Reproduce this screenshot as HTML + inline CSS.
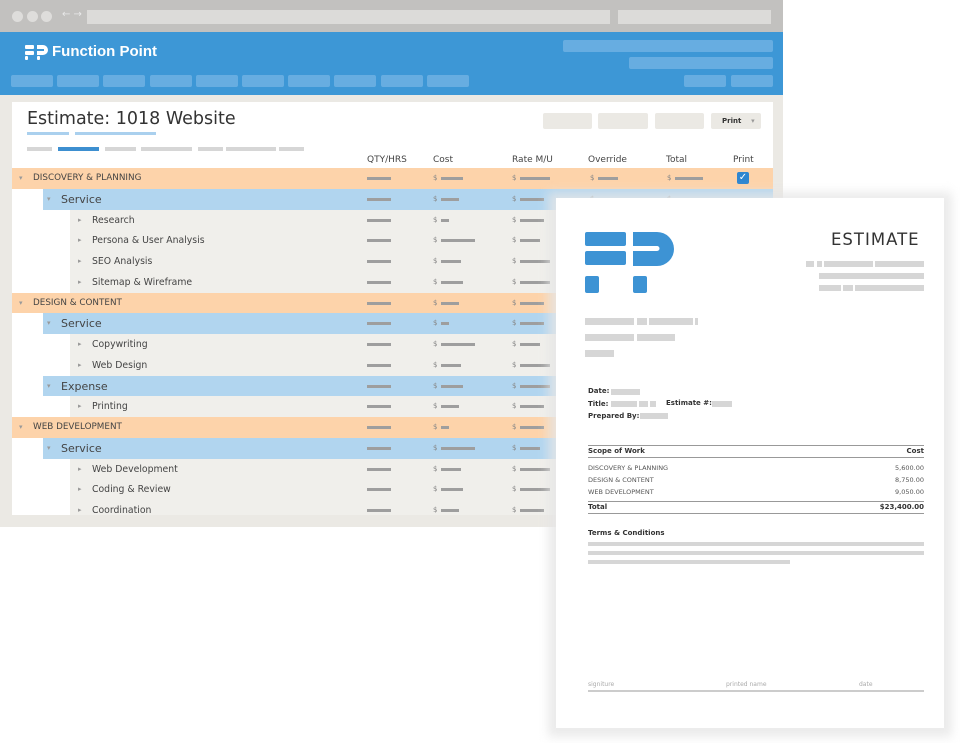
<!DOCTYPE html>
<html><head><meta charset="utf-8"><style>
*{margin:0;padding:0;box-sizing:border-box}
body{width:960px;height:743px;background:#fff;position:relative;overflow:hidden;font-family:"DejaVu Sans","Liberation Sans",sans-serif}
.a{position:absolute}
.bar{position:absolute;height:3px;background:#9e9e9e}
.gb{position:absolute;background:#d6d6d6}
.row{position:absolute;height:21px}
.t{position:absolute;font-size:8.5px;color:#333}
</style></head><body>
<div class="a" style="left:0;top:0;width:783px;height:32px;background:#c2c1bf"></div>
<div class="a" style="left:12px;top:11px;width:11px;height:11px;border-radius:50%;background:#dedddb"></div>
<div class="a" style="left:27px;top:11px;width:11px;height:11px;border-radius:50%;background:#dedddb"></div>
<div class="a" style="left:41px;top:11px;width:11px;height:11px;border-radius:50%;background:#dedddb"></div>
<div class="a" style="left:62px;top:9px;font-size:10px;color:#e8e8e8">← →</div>
<div class="a" style="left:87px;top:10px;width:523px;height:14px;background:#dcdbd9"></div>
<div class="a" style="left:618px;top:10px;width:153px;height:14px;background:#dcdbd9"></div>
<div class="a" style="left:0;top:32px;width:783px;height:63px;background:#3d97d6"></div>
<svg class="a" style="left:25px;top:45px" width="24" height="15" viewBox="0 0 24 15"><g fill="#fff"><rect x="0" y="0" width="9" height="4" rx="1"/><rect x="0" y="6" width="9" height="4" rx="1"/><rect x="0" y="11" width="3" height="4" rx="1"/><path d="M12 0h6a5 5 0 0 1 0 10h-6z"/><rect x="12" y="11" width="3" height="4" rx="1"/></g><rect x="12" y="4" width="7" height="2" fill="#3d97d6"/></svg>
<div class="a" style="left:52px;top:43px;font-size:15px;font-weight:bold;color:#fff;font-family:'Liberation Sans',sans-serif">Function Point</div>
<div class="a" style="left:563px;top:40px;width:210px;height:12px;border-radius:2px;background:#67ade1"></div>
<div class="a" style="left:629px;top:57px;width:144px;height:12px;border-radius:2px;background:#67ade1"></div>
<div class="a" style="left:684px;top:75px;width:42px;height:12px;border-radius:2px;background:#67ade1"></div>
<div class="a" style="left:731px;top:75px;width:42px;height:12px;border-radius:2px;background:#67ade1"></div>
<div id="nav"></div>
<div class="a" style="left:0;top:95px;width:783px;height:432px;background:#ebe9e4"></div>
<div class="a" style="left:12px;top:102px;width:761px;height:413px;background:#fff"></div>
<div class="a" style="left:27px;top:109px;font-size:17.5px;color:#333">Estimate: 1018 Website</div>
<div class="a" style="left:27px;top:132px;width:42px;height:3px;background:#aad0ee"></div>
<div class="a" style="left:75px;top:132px;width:81px;height:3px;background:#aad0ee"></div>
<div class="gb" style="left:27px;top:147px;width:25px;height:4px"></div>
<div class="a" style="left:58px;top:147px;width:41px;height:4px;background:#3d8fd0"></div>
<div class="gb" style="left:105px;top:147px;width:31px;height:4px"></div>
<div class="gb" style="left:141px;top:147px;width:51px;height:4px"></div>
<div class="gb" style="left:198px;top:147px;width:25px;height:4px"></div>
<div class="gb" style="left:226px;top:147px;width:50px;height:4px"></div>
<div class="gb" style="left:279px;top:147px;width:25px;height:4px"></div>
<div class="a" style="left:543px;top:113px;width:49px;height:16px;background:#ebe9e4;border-radius:2px"></div>
<div class="a" style="left:598px;top:113px;width:50px;height:16px;background:#ebe9e4;border-radius:2px"></div>
<div class="a" style="left:655px;top:113px;width:49px;height:16px;background:#ebe9e4;border-radius:2px"></div>
<div class="a" style="left:711px;top:113px;width:50px;height:16px;background:#ebe9e4;border-radius:2px;font-size:7px;line-height:16px;color:#333;padding-left:11px;font-weight:bold">Print &nbsp;&nbsp; <span style="color:#999">▾</span></div>
<div class="a" style="top:155px;left:367px;font-size:9px;color:#444">QTY/HRS</div>
<div class="a" style="top:155px;left:433px;font-size:9px;color:#444">Cost</div>
<div class="a" style="top:155px;left:512px;font-size:9px;color:#444">Rate M/U</div>
<div class="a" style="top:155px;left:588px;font-size:9px;color:#444">Override</div>
<div class="a" style="top:155px;left:666px;font-size:9px;color:#444">Total</div>
<div class="a" style="top:155px;left:733px;font-size:9px;color:#444">Print</div>
<div id="rows"></div>
<div class="a" style="left:548px;top:192px;width:404px;height:545px;background:#e6e6e6;filter:blur(5px);opacity:.8"></div>
<div class="a" style="left:556px;top:198px;width:388px;height:530px;background:#fff"></div>
<svg class="a" style="left:585px;top:232px" width="90" height="61" viewBox="0 0 90 61"><g fill="#3d93d4"><rect x="0" y="0" width="41" height="14" rx="2"/><rect x="0" y="19" width="41" height="14" rx="2"/><rect x="0" y="44" width="14" height="17" rx="2"/><path d="M48 0h24a17 17 0 0 1 0 34h-24z"/><rect x="48" y="44" width="14" height="17" rx="2"/></g><path d="M48 14h24a2.5 2.5 0 0 1 0 5h-24z" fill="#fff"/></svg>
<div class="a" style="left:831px;top:230px;font-size:16.5px;color:#333;letter-spacing:1px">ESTIMATE</div>
<div class="gb" style="left:806px;top:261px;width:8px;height:6px"></div><div class="gb" style="left:817px;top:261px;width:5px;height:6px"></div><div class="gb" style="left:824px;top:261px;width:49px;height:6px"></div><div class="gb" style="left:875px;top:261px;width:49px;height:6px"></div>
<div class="gb" style="left:819px;top:273px;width:105px;height:6px"></div>
<div class="gb" style="left:819px;top:285px;width:22px;height:6px"></div><div class="gb" style="left:843px;top:285px;width:10px;height:6px"></div><div class="gb" style="left:855px;top:285px;width:69px;height:6px"></div>
<div class="gb" style="left:585px;top:318px;width:49px;height:7px"></div><div class="gb" style="left:637px;top:318px;width:10px;height:7px"></div><div class="gb" style="left:649px;top:318px;width:44px;height:7px"></div><div class="gb" style="left:695px;top:318px;width:3px;height:7px"></div>
<div class="gb" style="left:585px;top:334px;width:49px;height:7px"></div><div class="gb" style="left:637px;top:334px;width:38px;height:7px"></div>
<div class="gb" style="left:585px;top:350px;width:29px;height:7px"></div>
<div class="t" style="left:588px;top:387px;font-size:7px;font-weight:bold">Date:</div><div class="gb" style="left:611px;top:389px;width:29px;height:6px"></div>
<div class="t" style="left:588px;top:400px;font-size:7px;font-weight:bold">Title:</div><div class="gb" style="left:611px;top:401px;width:26px;height:6px"></div><div class="gb" style="left:639px;top:401px;width:9px;height:6px"></div><div class="gb" style="left:650px;top:401px;width:6px;height:6px"></div>
<div class="t" style="left:666px;top:399px;font-size:7px;font-weight:bold">Estimate #:</div><div class="gb" style="left:712px;top:401px;width:20px;height:6px"></div>
<div class="t" style="left:588px;top:412px;font-size:7px;font-weight:bold">Prepared By:</div><div class="gb" style="left:640px;top:413px;width:28px;height:6px"></div>
<div class="a" style="left:588px;top:445px;width:336px;height:1px;background:#999"></div>
<div class="t" style="left:588px;top:447px;font-size:7px;font-weight:bold">Scope of Work</div><div class="t" style="right:36px;top:447px;font-size:7px;font-weight:bold">Cost</div>
<div class="a" style="left:588px;top:457px;width:336px;height:1px;background:#999"></div>
<div class="t" style="left:588px;top:464px;font-size:6.5px;color:#555">DISCOVERY &amp; PLANNING</div><div class="t" style="right:36px;top:464px;font-size:6.5px;color:#555">5,600.00</div>
<div class="t" style="left:588px;top:476px;font-size:6.5px;color:#555">DESIGN &amp; CONTENT</div><div class="t" style="right:36px;top:476px;font-size:6.5px;color:#555">8,750.00</div>
<div class="t" style="left:588px;top:488px;font-size:6.5px;color:#555">WEB DEVELOPMENT</div><div class="t" style="right:36px;top:488px;font-size:6.5px;color:#555">9,050.00</div>
<div class="a" style="left:588px;top:501px;width:336px;height:1px;background:#999"></div>
<div class="t" style="left:588px;top:503px;font-size:7px;font-weight:bold">Total</div><div class="t" style="right:36px;top:503px;font-size:7px;font-weight:bold">$23,400.00</div>
<div class="a" style="left:588px;top:513px;width:336px;height:1px;background:#999"></div>
<div class="t" style="left:588px;top:529px;font-size:7px;font-weight:bold">Terms &amp; Conditions</div>
<div class="gb" style="left:588px;top:542px;width:336px;height:4px"></div>
<div class="gb" style="left:588px;top:551px;width:336px;height:4px"></div>
<div class="gb" style="left:588px;top:560px;width:202px;height:4px"></div>
<div class="t" style="left:588px;top:681px;font-size:6px;color:#aaa">signiture</div>
<div class="t" style="left:726px;top:681px;font-size:6px;color:#aaa">printed name</div>
<div class="t" style="left:859px;top:681px;font-size:6px;color:#aaa">date</div>
<div class="a" style="left:588px;top:690px;width:336px;height:2px;background:#ccc"></div>
<script>
var n='';for(var i=0;i<10;i++){n+='<div class="a" style="left:'+(11+i*46.2)+'px;top:75px;width:42px;height:12px;border-radius:2px;background:#67ade1"></div>';}
document.getElementById('nav').outerHTML=n;
var R=[['o','DISCOVERY & PLANNING'],['b','Service'],['g','Research'],['g','Persona & User Analysis'],['g','SEO Analysis'],['g','Sitemap & Wireframe'],['o','DESIGN & CONTENT'],['b','Service'],['g','Copywriting'],['g','Web Design'],['b','Expense'],['g','Printing'],['o','WEB DEVELOPMENT'],['b','Service'],['g','Web Development'],['g','Coding & Review'],['g','Coordination']];
var h='',W=[[22,30,20,28,22],[18,24,30,20,24],[8,24,36,22,18],[34,20,18,26,22],[20,30,22,24,28]];
R.forEach(function(r,i){var y=168+i*20.75,L=r[0]=='o'?12:r[0]=='b'?43:70,bg=r[0]=='o'?'#fdd3aa':r[0]=='b'?'#b1d5ef':'#f0efeb';
var hh=Math.min(20.75,515-y);
h+='<div class="row" style="left:'+L+'px;top:'+y+'px;width:'+(773-L)+'px;height:'+hh+'px;background:'+bg+'"></div>';
var tx=r[0]=='o'?33:r[0]=='b'?61:92,fs=r[0]=='o'?'8.8px':r[0]=='b'?'11px':'9.3px',ar=r[0]=='g'?'▸':'▾';
h+='<div class="a" style="left:'+(tx-14)+'px;top:'+(y+6)+'px;font-size:7px;color:#999">'+ar+'</div>';
h+='<div class="a" style="left:'+tx+'px;top:'+(y+(r[0]=='b'?4:5))+'px;font-size:'+fs+';color:#444">'+r[1].replace('&','&amp;')+'</div>';
var w=W[i%5];
h+='<div class="bar" style="left:367px;top:'+(y+9)+'px;width:24px"></div>';
[[433,w[0]],[512,w[1]],[590,w[2]],[667,w[3]]].forEach(function(c){h+='<div class="a" style="left:'+c[0]+'px;top:'+(y+6)+'px;font-size:7px;color:#888">$</div><div class="bar" style="left:'+(c[0]+8)+'px;top:'+(y+9)+'px;width:'+c[1]+'px"></div>';});
});
h+='<div class="a" style="left:737px;top:172px;width:12px;height:12px;border-radius:2px;background:#2f86d0;color:#fff;font-size:10px;line-height:12px;text-align:center">✓</div>';
document.getElementById('rows').outerHTML=h;
</script>
</body></html>
